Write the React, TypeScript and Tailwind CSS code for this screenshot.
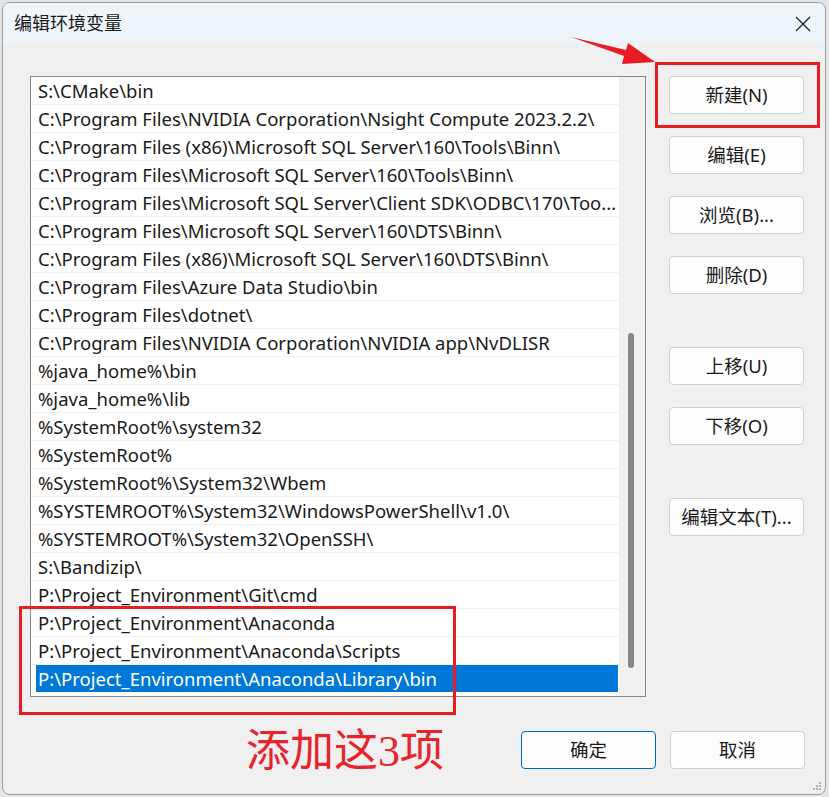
const paths = [
  "S:\\CMake\\bin",
  "C:\\Program Files\\NVIDIA Corporation\\Nsight Compute 2023.2.2\\",
  "C:\\Program Files (x86)\\Microsoft SQL Server\\160\\Tools\\Binn\\",
  "C:\\Program Files\\Microsoft SQL Server\\160\\Tools\\Binn\\",
  "C:\\Program Files\\Microsoft SQL Server\\Client SDK\\ODBC\\170\\Too...",
  "C:\\Program Files\\Microsoft SQL Server\\160\\DTS\\Binn\\",
  "C:\\Program Files (x86)\\Microsoft SQL Server\\160\\DTS\\Binn\\",
  "C:\\Program Files\\Azure Data Studio\\bin",
  "C:\\Program Files\\dotnet\\",
  "C:\\Program Files\\NVIDIA Corporation\\NVIDIA app\\NvDLISR",
  "%java_home%\\bin",
  "%java_home%\\lib",
  "%SystemRoot%\\system32",
  "%SystemRoot%",
  "%SystemRoot%\\System32\\Wbem",
  "%SYSTEMROOT%\\System32\\WindowsPowerShell\\v1.0\\",
  "%SYSTEMROOT%\\System32\\OpenSSH\\",
  "S:\\Bandizip\\",
  "P:\\Project_Environment\\Git\\cmd",
  "P:\\Project_Environment\\Anaconda",
  "P:\\Project_Environment\\Anaconda\\Scripts",
  "P:\\Project_Environment\\Anaconda\\Library\\bin",
]

const sideButtons = [
  { label: "新建(N)", mt: "mt-0" },
  { label: "编辑(E)", mt: "mt-[22px]" },
  { label: "浏览(B)...", mt: "mt-[22px]" },
  { label: "删除(D)", mt: "mt-[22px]" },
  { label: "上移(U)", mt: "mt-[53px]" },
  { label: "下移(O)", mt: "mt-[22px]" },
  { label: "编辑文本(T)...", mt: "mt-[53px]" },
]

const Btn = ({ label, primary }: { label: string; primary?: boolean }) => (
  <div
    className={`flex h-[38px] w-[135px] items-center justify-center rounded-[4px] border bg-[#fdfdfd] text-[18.5px] text-[#1a1a1a] ${
      primary ? "border-[#0067c0]" : "border-[#d0d0d0]"
    }`}
  >
    {label}
  </div>
)

const App = () => {
  return (
    <div
      className="relative h-[797px] w-[829px] overflow-hidden bg-[#e4e4e4] p-[2px] pr-[3px]"
      style={{ fontFamily: '"Noto Sans", "Noto Sans CJK SC", sans-serif' }}
    >
      <div className="flex h-[793px] flex-col overflow-hidden rounded-[8px] border border-[#9c9c9c] bg-[#f0f0f0]">

        {/* title bar */}
        <div className="flex h-[41px] shrink-0 items-center justify-between bg-[#eef5fa] pl-[11px] pr-[14px]">
          <span className="text-[18px] text-[#1a1a1a]">编辑环境变量</span>
          <svg width="16" height="16" viewBox="0 0 16 16">
            <path d="M1 1 L15 15 M15 1 L1 15" stroke="#1a1a1a" strokeWidth="1.2" />
          </svg>
        </div>

        {/* body */}
        <div className="flex pl-[27px] pt-[32px]">
          <div className="flex h-[621px] w-[616px] border border-[#828790] bg-white">
            <div className="flex-1">
              {paths.map((p, i) =>
                i === paths.length - 1 ? (
                  <div key={p} className="h-[28px] pb-[1px] pl-[5px] pr-[1px]">
                    <div className="flex h-[27px] items-center bg-[#0078d7] pl-[2px] text-[18.5px] text-white whitespace-nowrap">
                      {p}
                    </div>
                  </div>
                ) : (
                  <div
                    key={p}
                    className="flex h-[28px] items-center border-b border-[#f0f0f0] pl-[7px] text-[18.5px] text-[#1a1a1a] whitespace-nowrap overflow-hidden"
                  >
                    {p}
                  </div>
                )
              )}
            </div>
            <div className="flex w-[26px] justify-center bg-[#f0f0f0] pt-[256px]">
              <div className="ml-[-2px] h-[335px] w-[6px] rounded-full bg-[#858585]" />
            </div>
          </div>

          <div className="ml-[23px] flex flex-col">
            {sideButtons.map(b => (
              <div key={b.label} className={b.mt}>
                <Btn label={b.label} />
              </div>
            ))}
          </div>
        </div>

        {/* bottom buttons */}
        <div className="flex justify-end gap-[14px] pr-[20px] pt-[34px]">
          <Btn label="确定" primary />
          <Btn label="取消" />
        </div>

        {/* size grip */}
        <div className="flex flex-1 items-end justify-end pb-[3px] pr-[3px]">
          <svg width="10" height="10" viewBox="0 0 10 10" fill="#b4b4b4">
            <rect x="7" y="1" width="2" height="2" />
            <rect x="4" y="4" width="2" height="2" />
            <rect x="7" y="4" width="2" height="2" />
            <rect x="1" y="7" width="2" height="2" />
            <rect x="4" y="7" width="2" height="2" />
            <rect x="7" y="7" width="2" height="2" />
          </svg>
        </div>
      </div>

      {/* red annotations over the dialog */}
      <div className="absolute left-[655px] top-[62px] h-[66px] w-[165px] border-[3px] border-[#e81c24]" />
      <div className="absolute left-[19px] top-[606px] h-[109px] w-[437px] border-[3px] border-[#e81c24]" />
      <svg className="absolute left-0 top-0" width="829" height="797">
        <polygon
          points="571,37 626,50 628,43 655,62 622,64 624,56"
          fill="#e81c24"
        />
      </svg>
      <div
        className="absolute left-[246px] top-[730px] text-[44px] leading-none text-[#e8232b]"
        style={{ fontFamily: '"Liberation Serif", "Noto Sans CJK SC", serif' }}
      >
        添加这3项
      </div>
    </div>
  )
}

export default App
